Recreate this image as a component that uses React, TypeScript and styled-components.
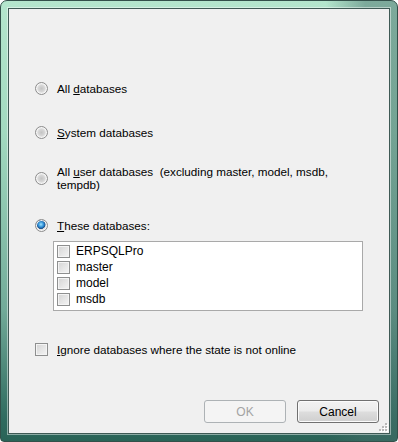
import styled, { createGlobalStyle } from 'styled-components'

const GlobalStyle = createGlobalStyle`
  body {
    margin: 0;
    background: #ffffff;
    font-family: 'Liberation Sans', Arial, sans-serif;
  }
`

const Window = styled.div`
  position: relative;
  box-sizing: border-box;
  width: 398px;
  height: 442px;
  padding: 7px;
  border: 1px solid #33504a;
  border-radius: 7px 7px 4px 4px;
  background:
    linear-gradient(90deg, rgba(255, 255, 255, 0) 0%, rgba(255, 255, 255, 0) 82%, rgba(70, 110, 105, 0.5) 92%, rgba(70, 110, 105, 0.5) 100%),
    linear-gradient(180deg, #b4e6cd 0%, #a2dac0 30%, #72ab99 70%, #2f6b5f 95%, #2a6357 100%);
  display: flex;
`

const Client = styled.div`
  flex: 1;
  display: flex;
  flex-direction: column;
  box-sizing: border-box;
  background: #f0f0f0;
  border: 1px solid #3f5a55;
  box-shadow: 0 0 0 1px rgba(255, 255, 255, 0.45);
  padding: 0 10px 10px 26px;
  font-size: 11.7px;
  color: #000;
`

const Option = styled.label<{ $top: number }>`
  display: flex;
  align-items: center;
  gap: 9px;
  margin-top: ${p => p.$top}px;
  min-height: 16px;
  line-height: 13px;
`

const Radio = styled.span<{ $checked?: boolean }>`
  flex: none;
  box-sizing: border-box;
  width: 13px;
  height: 13px;
  border-radius: 50%;
  border: 1px solid #8c8c8c;
  background: ${p =>
    p.$checked
      ? 'radial-gradient(circle at 45% 40%, #9fe3ff 0%, #2f8fd6 30%, #1b4f8a 48%, #dcdcdc 54%, #f4f4f4 100%)'
      : 'radial-gradient(circle at 50% 50%, #c4c4c4 0%, #d6d6d6 40%, #ececec 62%, #dedede 100%)'};
  box-shadow: inset 0 0 0 1px #f6f6f6;
`

const Check = styled.span`
  flex: none;
  box-sizing: border-box;
  width: 13px;
  height: 13px;
  border: 1px solid #8e8f8f;
  background: linear-gradient(135deg, #d4d4d4 0%, #e8e8e8 60%, #f4f4f4 100%);
  box-shadow: inset 0 0 0 1px #f4f4f4;
`

const Text = styled.span``

const List = styled.div`
  box-sizing: border-box;
  margin: 8px 0 0 18px;
  width: 310px;
  height: 70px;
  padding: 1px 3px;
  background: #fff;
  border: 1px solid #a9a9a9;
  display: flex;
  flex-direction: column;
`

const Item = styled.div`
  display: flex;
  align-items: center;
  gap: 6px;
  height: 16px;
  font-size: 12px;
`

const Footer = styled.div`
  margin-top: auto;
  display: flex;
  justify-content: flex-end;
  gap: 11px;
`

const Button = styled.button`
  box-sizing: border-box;
  width: 82px;
  height: 23px;
  padding: 0;
  font: inherit;
  font-size: 12px;
  color: #000;
  border: 1px solid #707070;
  border-radius: 3px;
  background: linear-gradient(180deg, #f2f2f2 0%, #ebebeb 48%, #dddddd 52%, #cfcfcf 100%);
  box-shadow: inset 0 0 0 1px #fbfbfb;

  &:disabled {
    color: #a3a3a3;
    border-color: #adb2b5;
    background: #f4f4f4;
    box-shadow: none;
  }
`

const Grip = styled.svg`
  position: absolute;
  right: 9px;
  bottom: 9px;
`

const GripDots = () => (
  <Grip width="9" height="9" viewBox="0 0 9 9">
    {[
      [6, 0],
      [3, 3],
      [6, 3],
      [0, 6],
      [3, 6],
      [6, 6],
    ].map(([x, y]) => (
      <g key={`${x}-${y}`}>
        <rect x={x + 1} y={y + 1} width="2" height="2" fill="#ffffff" />
        <rect x={x} y={y} width="2" height="2" fill="#b8b8b8" />
      </g>
    ))}
  </Grip>
)

const databases = ['ERPSQLPro', 'master', 'model', 'msdb']

export default function App() {
  return (
    <Window>
      <GlobalStyle />
      <Client>
        <Option $top={71}>
          <Radio />
          <Text>
            All <u>d</u>atabases
          </Text>
        </Option>
        <Option $top={28}>
          <Radio />
          <Text>
            <u>S</u>ystem databases
          </Text>
        </Option>
        <Option $top={25}>
          <Radio />
          <Text>
            All <u>u</u>ser databases&nbsp; (excluding master, model, msdb,
            <br />
            tempdb)
          </Text>
        </Option>
        <Option $top={26}>
          <Radio $checked />
          <Text>
            <u>T</u>hese databases:
          </Text>
        </Option>
        <List>
          {databases.map(name => (
            <Item key={name}>
              <Check />
              <Text>{name}</Text>
            </Item>
          ))}
        </List>
        <Option $top={30}>
          <Check />
          <Text>
            <u>I</u>gnore databases where the state is not online
          </Text>
        </Option>
        <Footer>
          <Button disabled>OK</Button>
          <Button>Cancel</Button>
        </Footer>
      </Client>
      <GripDots />
    </Window>
  )
}
